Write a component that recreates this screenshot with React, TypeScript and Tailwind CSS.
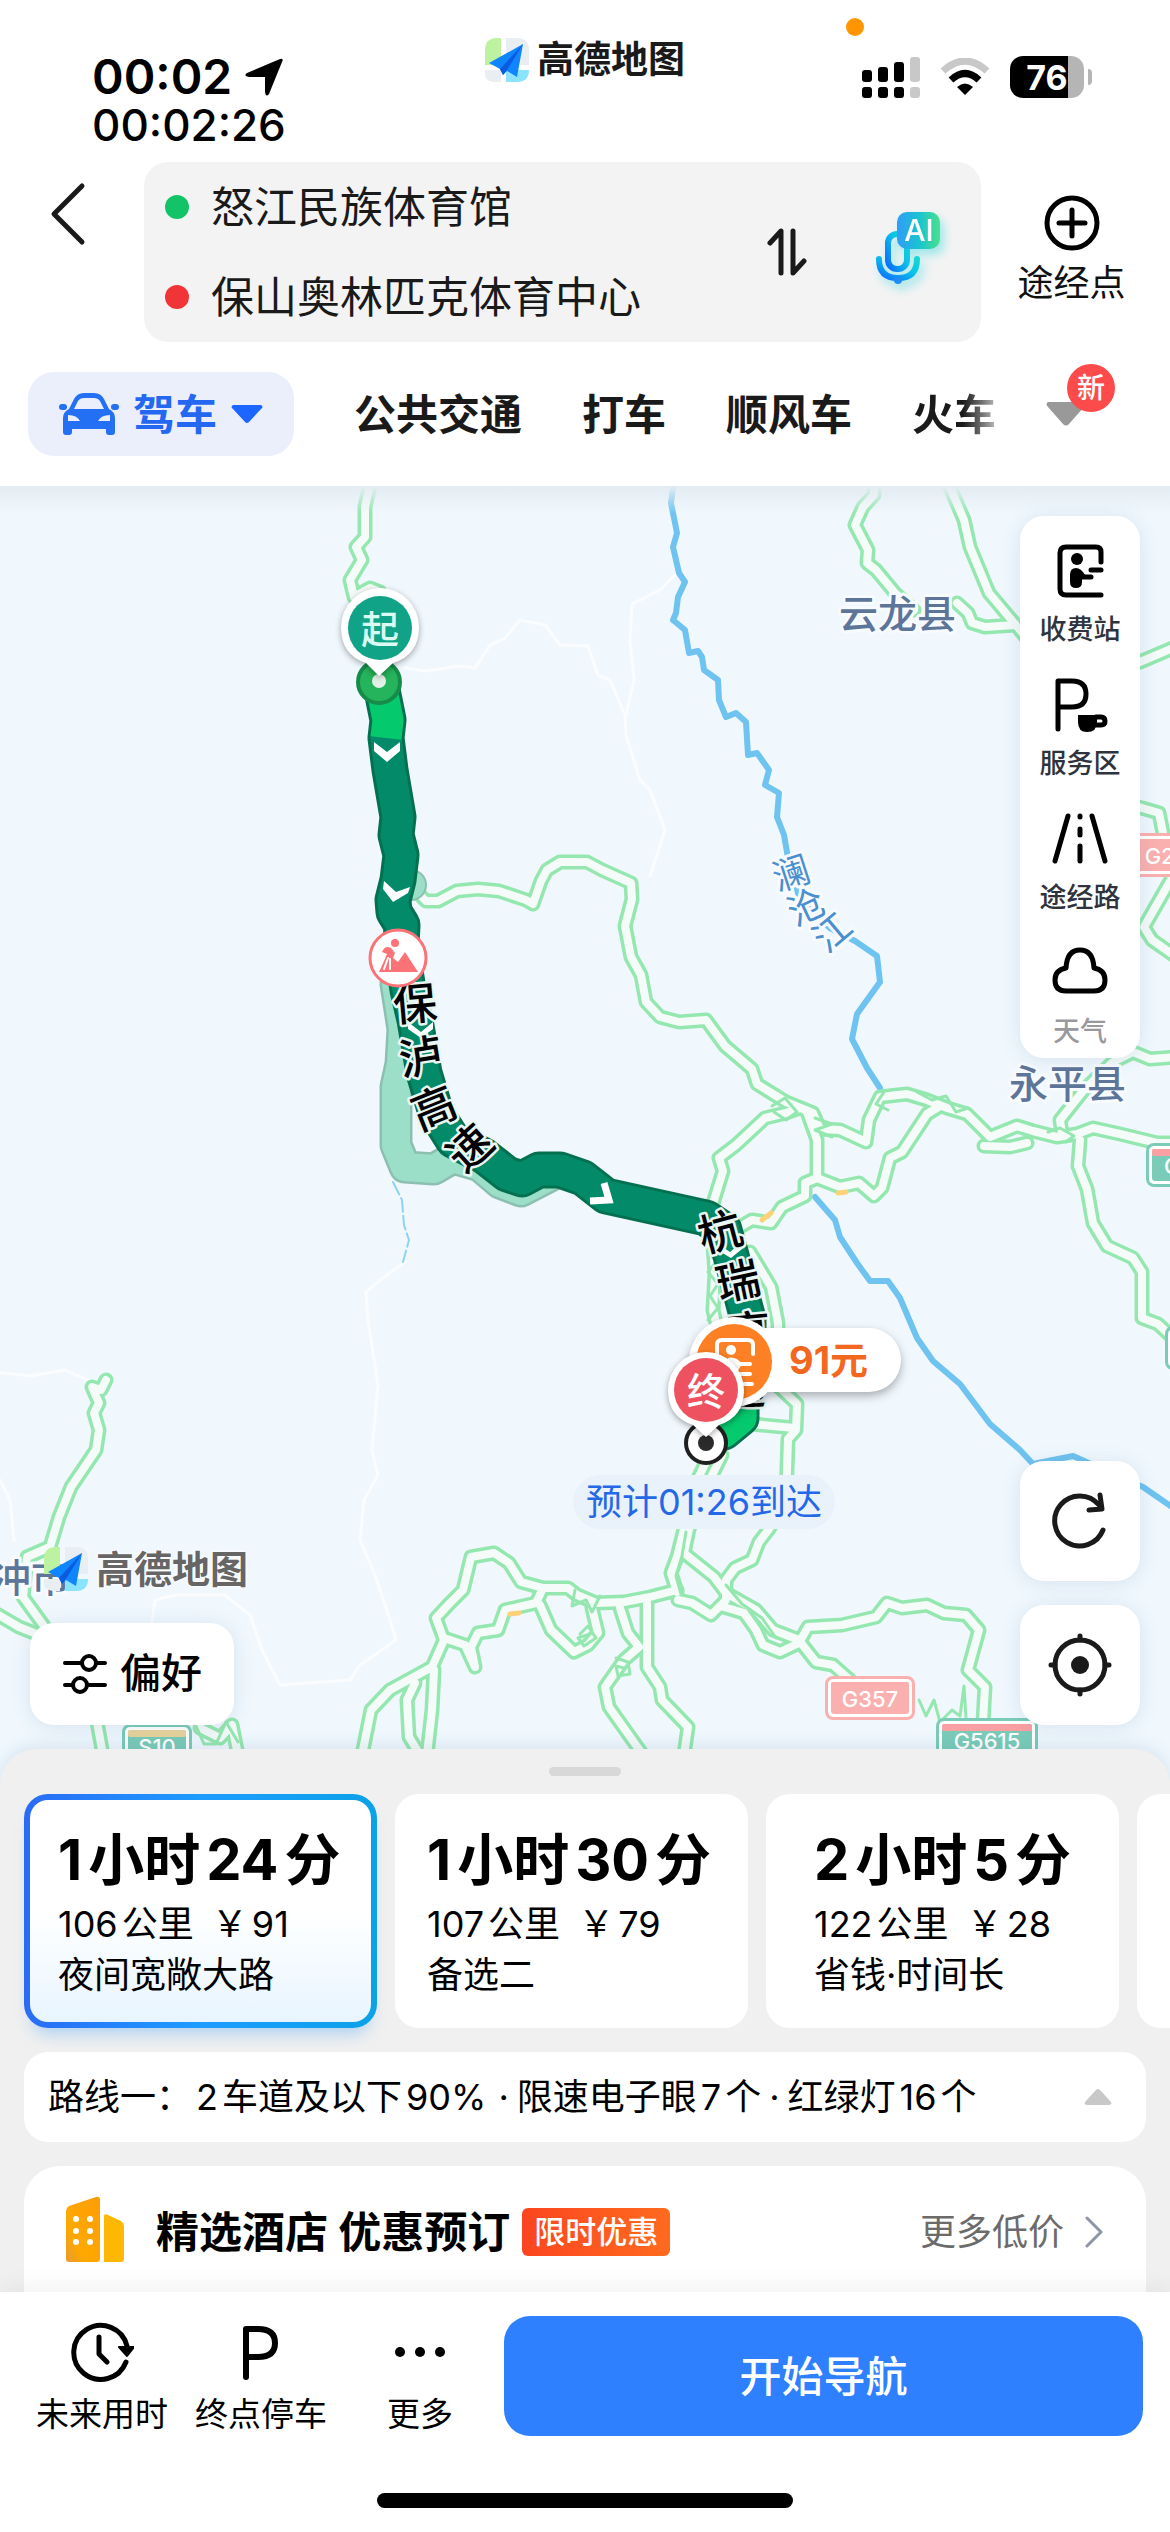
import type { ReactNode } from 'react';

const GREEN_ROADS = [
  '371,480 365,507 365,537 356,547 362,560 350,580 354,597 370,588 380,592',
  '874,480 874,495 863,507 855,525 868,550 867,563 876,570 895,593 914,610',
  '957,603 968,613 972,623 985,627 1015,625',
  '947,480 964,520 970,547 989,593 1020,630 1060,680 1140,662 1180,645',
  '1130,805 1142,808 1159,813 1163,833',
  '1172,878 1165,890 1144,927 1152,940 1175,956',
  '415,890 426,901 438,901 457,891 478,889 499,891 526,900 533,904 541,881 547,870 560,862 587,862 602,870 631,883 632,899 625,926 631,957 641,975 646,1002 660,1017 679,1022 706,1020 725,1046 752,1069 757,1084 786,1102 813,1113 820,1129 840,1130 866,1142 869,1120 880,1097 907,1094 927,1100 947,1108 967,1114 990,1137 1017,1126 1033,1131 1057,1137 1077,1134 1093,1128 1120,1134 1157,1143 1180,1143',
  '984,1146 1010,1147 1027,1143',
  '800,1108 786,1113 765,1118 736,1145 719,1158 723,1171 711,1210',
  '740,1227 752,1220 771,1223 782,1207 805,1196 805,1183 817,1178 817,1140 807,1112',
  '817,1178 840,1187 859,1183 874,1196 882,1188 890,1158 902,1152 927,1114 940,1106',
  '1080,1140 1078,1166 1087,1189 1093,1223 1107,1246 1133,1258 1142,1272 1142,1318 1158,1324 1175,1340',
  '1062,1134 1060,1120 1083,1091 1113,1062 1133,1052 1150,1059 1175,1057',
  '750,1252 771,1287 778,1323 778,1386 797,1404 796,1430 788,1439 786,1500 769,1529 759,1542 752,1560 735,1568 726,1580 726,1600 711,1615 692,1603 678,1600',
  '752,1424 794,1428',
  '713,1243 715,1274 713,1310 720,1340',
  '706,1462 690,1495 684,1529 677,1557 671,1573 677,1592',
  '722,1455 700,1500 689,1529 684,1553 714,1577 726,1593 756,1610 773,1630 799,1640',
  '724,1607 744,1613 756,1630 763,1645 780,1652 799,1643 808,1627 842,1625 876,1617 887,1603 902,1608 927,1605 944,1613 966,1615 979,1630 968,1670 985,1687 983,1722',
  '801,1643 816,1662 833,1665 850,1680',
  '677,1590 650,1597 624,1602 596,1603 577,1595 568,1588 543,1588 521,1582 509,1563 494,1553 471,1557 463,1590 450,1603 436,1618 444,1640 432,1667 390,1690 371,1710 362,1755',
  '543,1588 536,1603 505,1610 498,1630 478,1633 471,1647 475,1667 465,1645 444,1638',
  '540,1605 551,1630 574,1652 588,1645 598,1633 592,1608',
  '620,1608 628,1633 639,1647 624,1660 605,1687 609,1707 643,1755',
  '647,1603 647,1667 660,1687 662,1700 688,1727 684,1755',
  '434,1670 432,1710 427,1755',
  '415,1683 407,1700 409,1737 420,1755',
  '106,1380 101,1390 92,1387 99,1403 94,1413 99,1430 96,1450 71,1487 59,1517 50,1547 27,1557 23,1597 44,1626',
  '-5,1613 19,1627 34,1633',
  '97,1722 103,1755',
  '200,1728 220,1738 232,1725 238,1755',
];

// thin slip roads and tangled interchanges
const GREEN_LINES = [
  '772,1106 785,1098 797,1112 786,1120 774,1112',
  '815,1118 832,1124 815,1130 832,1137',
  '919,1700 926,1716 934,1700 940,1722 952,1710 960,1716 964,1686 966,1718',
  '575,1590 572,1606 586,1600 592,1612 600,1596',
  '580,1634 588,1626 596,1638 584,1646 578,1638 590,1634',
  '616,1658 628,1662 630,1674 618,1676 616,1666 624,1668',
  '708,1250 716,1262 708,1272 718,1284 710,1296 718,1308 708,1320',
  '1048,1132 1060,1128 1074,1136 1066,1142',
  '196,1726 204,1744 216,1744 226,1722 238,1742',
  '884,1092 876,1104 888,1110',
  '917,1092 932,1100 946,1096 956,1112 968,1108',
  '686,1532 682,1556 676,1576 681,1594',
  '726,1585 742,1604 762,1618 776,1638',
];

const RIVERS = [
  '674,480 671,503 677,533 673,547 679,573 685,582 678,597 676,613 673,620 685,630 689,653 698,651 702,657 704,670 718,680 719,700 726,717 736,713 746,722 748,755 757,753 769,770 765,785 779,793 777,817 784,835 788,858 800,900 830,928 855,941 877,956 880,982 857,1014 852,1039 867,1068 880,1088',
  '815,1197 835,1220 840,1237 857,1263 870,1281 888,1281 900,1298 917,1338 933,1361 960,1384 990,1424 1020,1450 1033,1464 1073,1456 1143,1487 1175,1509',
];

const FAINT_ROADS = [
  '405,668 425,671 460,666 475,668 490,645 505,638 520,620 545,625 560,645 588,646 598,675 610,680 625,715 626,735 640,780 650,790 665,830 652,870 650,876',
  '675,575 660,590 632,604 630,640 634,680 626,715',
  '405,1262 380,1280 366,1292 368,1320 378,1385 372,1450 378,1475 364,1500 360,1540 375,1575 390,1620 396,1640 360,1665 350,1680 280,1685 262,1650 250,1615 225,1595 175,1595 155,1600 152,1622',
  '-5,1372 30,1376 65,1370 92,1382',
  '0,1480 10,1500 14,1540',
];

const ROUTE =
  '382,690 388,720 386,738 390,770 398,817 396,835 401,855 398,880 393,900 394,912 402,925 401,945 408,990 415,1020 424,1073 436,1113 453,1140 484,1156 507,1174 522,1179 539,1170 560,1170 583,1178 606,1196 706,1218 724,1230 736,1274 748,1319 748,1377 741,1400 741,1418 724,1432';
const ALT_ROUTE = '400,955 396,984 403,1029 401,1064 396,1087 396,1145 405,1167 434,1169 453,1158 480,1166 500,1183 521,1191 550,1176';

const ROUTES = [
  { hours: '1', minutes: '24', distance: '106', price: '91', note: '夜间宽敞大路', pad: 'pl-7' },
  { hours: '1', minutes: '30', distance: '107', price: '79', note: '备选二', pad: 'pl-8' },
  { hours: '2', minutes: '5', distance: '122', price: '28', note: '省钱·时间长', pad: 'pl-12' },
];

const TABS = ['公共交通', '打车', '顺风车'];

function LogoMark({ className }: { className: string }) {
  return (
    <svg viewBox="0 0 44 44" className={className} aria-hidden="true">
      <path d="M12 0H16V27H0V12Q0 0 12 0Z" fill="#bdf3a0" />
      <path d="M21 0H32Q44 0 44 12V27H21Z" fill="#e8eef2" />
      <path d="M0 32H16V44H12Q0 44 0 36Z" fill="#e8eef2" />
      <path d="M21 32H44Q44 44 32 44H21Z" fill="#8be3fd" />
      <path d="M38 6L4 25L15 31L18 37L22 33L32 39Z" fill="#0f86ff" />
      <path d="M38 6L15 31L18 37L22 32Z" fill="#0a5be0" />
    </svg>
  );
}

function StatusBar() {
  return (
    <div className="relative grid h-[162px] grid-cols-3 items-start">
      <div className="flex flex-col pt-[54px] pl-[92px] font-semibold text-black">
        <div className="flex h-[46px] items-center gap-3 text-[48px] leading-none">
          <span>00:02</span>
          <svg viewBox="0 0 40 40" className="size-10" aria-hidden="true">
            <path d="M36 2Q40 1 38 5L25 37Q22 41 21 35V20H5Q-1 19 3 16Z" />
          </svg>
        </div>
        <span className="text-[44px] leading-[50px] font-medium">00:02:26</span>
      </div>
      <div className="flex items-center justify-center gap-2 pt-9 text-[37px] leading-12 font-bold text-[#1a1a1a]">
        <LogoMark className="size-11" />
        高德地图
      </div>
      <div className="flex items-center justify-end gap-5 pt-[56px] pr-[78px]">
        <svg viewBox="0 0 58 42" className="h-[42px] w-[58px]" aria-hidden="true">
          <rect x="0" y="14" width="10" height="12" rx="3" />
          <rect x="16" y="11" width="10" height="15" rx="3" />
          <rect x="32" y="6" width="10" height="20" rx="3" />
          <rect x="48" y="1" width="10" height="25" rx="3" fill="#c8c8c8" />
          <rect x="0" y="31" width="10" height="11" rx="3" />
          <rect x="16" y="31" width="10" height="11" rx="3" />
          <rect x="32" y="31" width="10" height="11" rx="3" />
          <rect x="48" y="31" width="10" height="11" rx="3" fill="#c8c8c8" />
        </svg>
        <svg viewBox="0 0 50 38" className="h-[38px] w-[50px]" fill="none" strokeWidth="7" aria-hidden="true">
          <path d="M3 13Q25 -7 47 13" stroke="#c8c8c8" />
          <path d="M11 22Q25 9 39 22" stroke="#000" />
          <path d="M17 29Q25 22 33 29L25 37Z" fill="#000" />
        </svg>
        <div className="flex items-center gap-1">
          <div className="flex h-[42px] w-[74px] items-center justify-center rounded-[13px] bg-linear-to-r from-black from-78% to-[#b5b5b5] to-78% text-[34px] font-bold text-white">
            76
          </div>
          <span className="h-4 w-1 rounded-r-full bg-[#b5b5b5]" />
        </div>
      </div>
      <span className="absolute top-[18px] right-[306px] size-[18px] rounded-full bg-[#ff9500]" />
    </div>
  );
}

function RouteSearch() {
  return (
    <div className="flex items-stretch">
      <button aria-label="返回" className="flex w-36 shrink-0 items-start pt-5 pl-[50px]">
        <svg viewBox="0 0 36 64" className="h-16 w-9" fill="none" stroke="#1a1a1a" strokeWidth="5" strokeLinecap="round" strokeLinejoin="round">
          <path d="M32 4L4 32L32 60" />
        </svg>
      </button>
      <div className="flex h-[180px] min-w-0 flex-1 items-center rounded-[24px] bg-[#f3f3f3] pr-10 pl-[21px]">
        <div className="flex min-w-0 flex-1 flex-col">
          <label className="flex h-[90px] items-center gap-[22px]">
            <span className="size-6 shrink-0 rounded-full bg-[#12c467]" />
            <input aria-label="起点" defaultValue="怒江民族体育馆" className="w-full min-w-0 bg-transparent text-[43px] text-[#1a1a1a] outline-none" />
          </label>
          <label className="flex h-[90px] items-center gap-[22px]">
            <span className="size-6 shrink-0 rounded-full bg-[#f13437]" />
            <input aria-label="终点" defaultValue="保山奥林匹克体育中心" className="w-full min-w-0 bg-transparent text-[43px] text-[#1a1a1a] outline-none" />
          </label>
        </div>
        <button aria-label="交换起终点" className="mr-17">
          <svg viewBox="0 0 40 48" className="h-12 w-10" fill="none" stroke="#1a1a1a" strokeWidth="5" strokeLinecap="round" strokeLinejoin="round">
            <path d="M14 45V3L3 15M26 3V45L37 33" />
          </svg>
        </button>
        <button aria-label="语音助手" className="-mt-2 drop-shadow-[4px_6px_5px_rgba(0,210,220,0.35)]">
          <svg viewBox="0 0 66 74" className="h-[74px] w-[66px]" fill="none">
            <defs>
              <linearGradient id="mic" x1="0" y1="1" x2="1" y2="0">
                <stop offset="0" stopColor="#0a6cff" />
                <stop offset="0.6" stopColor="#0cc4e8" />
                <stop offset="1" stopColor="#12d9d0" />
              </linearGradient>
              <linearGradient id="ai" x1="0" y1="0" x2="1" y2="0">
                <stop offset="0" stopColor="#329cf8" />
                <stop offset="0.5" stopColor="#18c3d2" />
                <stop offset="1" stopColor="#4ae08c" />
              </linearGradient>
            </defs>
            <rect x="13" y="23" width="19" height="35" rx="9" stroke="url(#mic)" strokeWidth="6" />
            <path d="M4 48Q4 67 23 67Q42 67 42 48" stroke="url(#mic)" strokeWidth="6" strokeLinecap="round" />
            <circle cx="23" cy="69" r="4" fill="#1d8cf5" />
            <rect x="22" y="1" width="43" height="37" rx="10" fill="url(#ai)" />
            <text x="44" y="30" textAnchor="middle" fontSize="30" fontWeight="500" fill="#fff">AI</text>
          </svg>
        </button>
      </div>
      <button className="flex w-[189px] shrink-0 flex-col items-center gap-[10px] pt-8 pr-2 text-[36px] leading-[42px] text-[#111]">
        <svg viewBox="0 0 58 58" className="size-[58px]" fill="none" stroke="#000" strokeWidth="5" strokeLinecap="round" aria-hidden="true">
          <circle cx="29" cy="29" r="25" />
          <path d="M29 16V42M16 29H42" />
        </svg>
        途经点
      </button>
    </div>
  );
}

function TransportTabs() {
  return (
    <nav className="relative flex items-center gap-15 pt-[30px] pb-[30px] pl-7 text-[42px] font-bold text-[#1a1a1a]">
      <button className="flex h-[84px] w-[266px] shrink-0 items-center justify-center gap-[14px] rounded-[26px] bg-[#eaeffb] text-[#2468f2]">
        <svg viewBox="0 0 60 42" className="h-[42px] w-[60px]" fill="#2470f4" aria-hidden="true">
          <path fillRule="evenodd" d="M10 16L15 6Q18 0 25 0H35Q42 0 45 6L50 16Q56 19 56 25V39Q56 42 53 42H50Q47 42 47 39V36H13V39Q13 42 10 42H7Q4 42 4 39V25Q4 19 10 16ZM15 16H45L41 8Q39 5 35 5H25Q21 5 19 8ZM9 22V28H21Q18 22 9 22ZM51 22Q42 22 39 28H51Z" />
          <rect x="0" y="11" width="8" height="6" rx="3" />
          <rect x="52" y="11" width="8" height="6" rx="3" />
        </svg>
        驾车
        <svg viewBox="0 0 32 18" className="h-[18px] w-8" aria-hidden="true">
          <path d="M2 0H30Q33 2 30 4L18 17Q16 19 14 17L2 4Q-1 2 2 0Z" fill="#1c66ff" />
        </svg>
      </button>
      {TABS.map((tab) => (
        <button key={tab} className="shrink-0 whitespace-nowrap">{tab}</button>
      ))}
      <button className="shrink-0 bg-linear-to-r from-[#1a1a1a] from-60% to-[#bbb] bg-clip-text text-transparent">火车</button>
      <button aria-label="更多出行方式" className="absolute top-[60px] right-[84px]">
        <svg viewBox="0 0 40 24" className="h-6 w-10">
          <path d="M2 0H38Q41 2 38 5L23 22Q20 25 17 22L2 5Q-1 2 2 0Z" fill="#999" />
        </svg>
      </button>
      <span className="absolute top-[22px] right-[55px] flex size-12 items-center justify-center rounded-full bg-[#fd4a4a] text-[28px] font-medium text-white">新</span>
    </nav>
  );
}

function Glyph({ x, y, turn, children }: { x: number; y: number; turn: number; children: string }) {
  return (
    <text x={x} y={y} transform={`rotate(${turn} ${x} ${y})`} textAnchor="middle" dominantBaseline="central">
      {children}
    </text>
  );
}

function Shield({ x, y, width, label, top, body }: { x: number; y: number; width: number; label: string; top: string; body: string }) {
  return (
    <g>
      <rect x={x} y={y} width={width} height="44" rx="8" fill={body} />
      <rect x={x + 3} y={y + 3} width={width - 6} height="38" rx="5" fill="#fff" />
      <rect x={x + 6} y={y + 6} width={width - 12} height="32" rx="3" fill={body} />
      <rect x={x + 6} y={y + 6} width={width - 12} height="7" rx="2" fill={top} />
      <text x={x + width / 2} y={y + 31} textAnchor="middle" fontSize="22" fontWeight="500" fill="#fff">{label}</text>
    </g>
  );
}

function RouteMap() {
  return (
    <svg viewBox="0 486 1170 1303" preserveAspectRatio="xMidYMin slice" className="absolute inset-0 h-full w-full" fill="none" strokeLinejoin="round" strokeLinecap="round">
      {FAINT_ROADS.map((points) => <polyline key={points} points={points} stroke="#fafcfe" strokeWidth="3" />)}
      <polyline points="403,1100 410,1120 404,1140" stroke="#8fd2f4" strokeWidth="3" />
      <polyline points="393,1182 402,1200 404,1225 409,1240 403,1262" stroke="#8fd2f4" strokeWidth="2" strokeDasharray="14 4" />
      {RIVERS.map((points) => <polyline key={points} points={points} stroke="#6fc3f0" strokeWidth="6" />)}
      {GREEN_ROADS.map((points) => <polyline key={points} points={points} stroke="#95e7b0" strokeWidth="15" />)}
      {GREEN_ROADS.map((points) => <polyline key={points} points={points} stroke="#f4fbf9" strokeWidth="8" />)}
      {GREEN_LINES.map((points) => <polyline key={points} points={points} stroke="#95e7b0" strokeWidth="3" />)}
      <path d="M762 1220L771 1213M838 1193L846 1192M510 1614L519 1613" stroke="#fdd278" strokeWidth="5" />

      <Shield x={825} y={1676} width={90} label="G357" top="#fbb0b0" body="#fbb0b0" />
      <Shield x={936} y={1718} width={102} label="G5615" top="#f9a0a2" body="#7accb9" />
      <Shield x={122} y={1724} width={70} label="S10" top="#ead59d" body="#7accb9" />
      <Shield x={1126} y={833} width={90} label="G215" top="#fbb0b0" body="#fbb0b0" />
      <Shield x={1146} y={1143} width={80} label="G56" top="#f9a0a2" body="#7accb9" />
      <Shield x={1165} y={1326} width={80} label="" top="#7accb9" body="#7accb9" />

      <circle cx="411" cy="885" r="15" fill="#9bdfc9" stroke="#8dbfb0" strokeWidth="2" />
      <polyline points={ALT_ROUTE} stroke="#8dbfb0" strokeWidth="33" />
      <polyline points={ALT_ROUTE} stroke="#9bdfc9" strokeWidth="28" />
      <polyline points={ROUTE} stroke="#04704f" strokeWidth="37" />
      <polyline points={ROUTE} stroke="#038b69" strokeWidth="31" />
      <path d="M382 690L388 720L386 738" stroke="#04c96d" strokeWidth="31" strokeLinecap="butt" />
      <path d="M741 1400V1418L724 1432" stroke="#04c96d" strokeWidth="31" />
      <g fill="#fff">
        <path d="M374 742L387 752L400 742V751L387 762L374 751Z" />
        <path d="M384 881L396 892L410 887L408 893L393 902L383 889Z" />
        <path d="M408 1022L421 1032L433 1022V1029L421 1038L408 1029Z" />
        <path d="M718 1244L730 1252L742 1242V1249L731 1258L719 1251Z" />
      </g>
      <path d="M604 1183L609 1200L590 1201" stroke="#fff" strokeWidth="7" strokeLinejoin="miter" strokeLinecap="butt" />

      <g className="[paint-order:stroke]" fontSize="39" fontWeight="500" fill="#5d7598" stroke="#f7fbff">
        <text x="839" y="628" strokeWidth="6">云龙县</text>
        <text x="1009" y="1098" strokeWidth="6">永平县</text>
        <text x="-8" y="1592" strokeWidth="6">冲市</text>
      </g>
      <g className="[paint-order:stroke]" fontSize="37" fill="#4b8fce" stroke="#f7fbff" strokeWidth="6">
        <Glyph x={791} y={873} turn={-18}>澜</Glyph>
        <Glyph x={806} y={907} turn={-25}>沧</Glyph>
        <Glyph x={832} y={932} turn={-40}>江</Glyph>
      </g>
      <g className="[paint-order:stroke]" fontSize="44" fontWeight="500" fill="#000" stroke="#e9f6f2" strokeWidth="5">
        <Glyph x={415} y={1004} turn={-5}>保</Glyph>
        <Glyph x={421} y={1057} turn={-9}>泸</Glyph>
        <Glyph x={434} y={1108} turn={-22}>高</Glyph>
        <Glyph x={470} y={1148} turn={-42}>速</Glyph>
        <Glyph x={720} y={1232} turn={-15}>杭</Glyph>
        <Glyph x={738} y={1281} turn={-12}>瑞</Glyph>
        <Glyph x={749} y={1332} turn={-5}>高</Glyph>
        <Glyph x={744} y={1388} turn={0}>速</Glyph>
      </g>

      {/* roadworks */}
      <circle cx="398" cy="958" r="28" fill="#fff" stroke="#fb7376" strokeWidth="3" />
      <g fill="#fb7376">
        <circle cx="395" cy="943" r="4" />
        <path d="M379 972L384 961L387 954L382 952Q385 945 391 948L395 953L393 958L398 962L405 952L418 972Z" />
      </g>
      <path d="M388 958L384 969M390 959V969" stroke="#fff" strokeWidth="2" />

      {/* start pin */}
      <circle cx="379" cy="682" r="21" fill="#25b35b" stroke="#168c4b" strokeWidth="4" />
      <circle cx="379" cy="681" r="7" fill="#e3f2e8" />
      <g className="drop-shadow-[0_2px_3px_rgba(0,0,0,0.35)]">
        <path d="M379 676L366 663Q341 655 341 627A39 39 0 0 1 419 627Q419 655 393 663Z" fill="#fff" />
      </g>
      <circle cx="380" cy="628" r="32" fill="#10a388" />
      <text x="380" y="629" textAnchor="middle" dominantBaseline="central" fontSize="38" fontWeight="500" fill="#d9fbf3">起</text>

      {/* toll price */}
      <g className="drop-shadow-[0_4px_5px_rgba(0,0,0,0.3)]">
        <rect x="734" y="1328" width="167" height="64" rx="32" fill="#fff" />
        <circle cx="734" cy="1362" r="45" fill="#fff" />
      </g>
      <circle cx="734" cy="1362" r="38" fill="#fd8025" />
      <path d="M717 1378V1345Q717 1340 722 1340H748Q753 1340 753 1345V1354M738 1364H750M738 1374H750M722 1384H752" stroke="#fff" strokeWidth="4" />
      <circle cx="731" cy="1350" r="5" fill="#fff" />
      <path d="M728 1358Q736 1356 742 1364L736 1374H728Z" fill="#fff" />
      <text x="789" y="1374" fontSize="38" fontWeight="700" fill="#f4671f">91元</text>

      {/* end pin */}
      <circle cx="706" cy="1443" r="20" fill="#fff" stroke="#1f1f1f" strokeWidth="4" />
      <circle cx="706" cy="1443" r="8" fill="#2b2b2b" />
      <g className="drop-shadow-[0_2px_3px_rgba(0,0,0,0.35)]">
        <path d="M706 1437L693 1425Q668 1417 668 1390A38 38 0 0 1 744 1390Q744 1417 719 1425Z" fill="#fff" />
      </g>
      <circle cx="706" cy="1390" r="32" fill="#ee5260" />
      <text x="706" y="1391" textAnchor="middle" dominantBaseline="central" fontSize="38" fontWeight="500" fill="#fff">终</text>

      <rect x="573" y="1475" width="262" height="54" rx="27" fill="#e9f2fb" />
      <text x="704" y="1502" textAnchor="middle" dominantBaseline="central" fontSize="36" fill="#2468e8">预计01:26到达</text>
    </svg>
  );
}

function LayerButton({ label, muted, children }: { label: string; muted?: boolean; children: ReactNode }) {
  return (
    <button className={`flex flex-col items-center gap-4 text-[27px] leading-8 font-medium ${muted ? 'text-[#99999d]' : 'text-[#2e333d]'}`}>
      <svg viewBox="0 0 56 54" className="h-[54px] w-14" fill="none" stroke="#000" strokeWidth="5" strokeLinecap="round" strokeLinejoin="round" aria-hidden="true">
        {children}
      </svg>
      {label}
    </button>
  );
}

function MapPanel() {
  return (
    <main className="relative flex min-h-[1300px] flex-1 items-stretch justify-between overflow-hidden bg-[#f0f8fe]">
      <RouteMap />
      <div className="absolute inset-x-0 top-0 h-7 bg-linear-to-b from-[#e4ecf3] to-transparent" />
      <div className="relative flex flex-col items-start justify-end gap-[30px] pb-16 pl-[30px]">
        <div className="flex items-center gap-2 pl-[14px] text-[38px] leading-12 font-bold text-[#666] [text-shadow:0_0_3px_#fff,0_0_3px_#fff]">
          <LogoMark className="size-11" />
          高德地图
        </div>
        <button className="flex h-[102px] w-[204px] items-center justify-center gap-3 rounded-[24px] bg-white text-[41px] font-medium text-black shadow-[0_2px_20px_rgba(60,90,130,0.14)]">
          <svg viewBox="0 0 46 40" className="h-10 w-[46px]" fill="none" stroke="#000" strokeWidth="4" strokeLinecap="round" aria-hidden="true">
            <path d="M3 9H18M35 9H43M3 31H10M27 31H43" />
            <circle cx="27" cy="9" r="7" />
            <circle cx="18" cy="31" r="7" />
          </svg>
          偏好
        </button>
      </div>
      <div className="relative flex w-[150px] flex-col justify-between pt-[30px] pr-[30px] pb-16">
        <div className="flex flex-col gap-8 rounded-[24px] bg-white pt-7 pb-[10px] shadow-[0_2px_20px_rgba(60,90,130,0.14)]">
          <LayerButton label="收费站">
            <path d="M49 18V8Q49 3 44 3H14Q8 3 8 9V45Q8 51 14 51H49M39 26H49M31 33H39" />
            <circle cx="25" cy="15" r="6" fill="#000" stroke="none" />
            <path d="M18 31Q18 24 24 24Q29 24 33 31L30 36V38Q30 44 24 44Q18 44 18 38Z" fill="#000" stroke="none" />
          </LayerButton>
          <LayerButton label="服务区">
            <path d="M6 51V3H20Q34 3 34 16Q34 29 20 29H6M44 39H49Q53 39 53 43Q53 47 49 47H44" />
            <path d="M26 37H45V44Q45 54 35 54Q26 54 26 44Z" fill="#000" stroke="none" />
          </LayerButton>
          <LayerButton label="途经路">
            <path d="M16 4L3 49M40 4L53 49M28 4V5M28 17V23M28 34V49" />
          </LayerButton>
          <LayerButton label="天气" muted>
            <path d="M14 45Q3 45 3 34Q3 24 14 22Q15 4 28 4Q41 4 42 22Q53 24 53 34Q53 45 42 45Z" />
          </LayerButton>
        </div>
        <div className="flex flex-col gap-6">
          <button aria-label="刷新" className="flex size-30 items-center justify-center rounded-[24px] bg-white shadow-[0_2px_20px_rgba(60,90,130,0.14)]">
            <svg viewBox="0 0 56 58" className="h-[58px] w-14" fill="none" stroke="#1a1a1a" strokeWidth="5" strokeLinecap="round" strokeLinejoin="round">
              <path d="M51 38A25 25 0 1 1 47 13M48 3L50 17L37 18" />
            </svg>
          </button>
          <button aria-label="定位" className="flex size-30 items-center justify-center rounded-[24px] bg-white shadow-[0_2px_20px_rgba(60,90,130,0.14)]">
            <svg viewBox="0 0 66 66" className="size-[66px]" fill="none" stroke="#1a1a1a" strokeWidth="5" strokeLinecap="round">
              <circle cx="33" cy="33" r="25" />
              <path d="M33 4V8M33 58V62M4 33H8M58 33H62" />
              <circle cx="33" cy="33" r="9" fill="#1a1a1a" stroke="none" />
            </svg>
          </button>
        </div>
      </div>
    </main>
  );
}

function RouteCards() {
  return (
    <div className="flex gap-[18px] overflow-hidden pb-6 pl-6">
      {ROUTES.map((route, index) => (
        <div key={route.note} className={`w-[353px] shrink-0 rounded-[24px] ${index === 0 ? 'bg-linear-to-r from-[#2a6bf5] via-[#1d9cff] to-[#0aa2e8] p-[6px] shadow-[0_14px_16px_-8px_rgba(110,180,245,0.5)]' : 'bg-white p-0'}`}>
          <button className={`flex w-full flex-col items-start text-left text-black ${route.pad} ${index === 0 ? 'h-[222px] rounded-[18px] bg-linear-to-b from-white from-50% to-[#e8f5ff] pt-6' : 'h-[234px] pt-[30px]'}`}>
            <span className="flex items-baseline text-[56px] leading-[72px] font-bold whitespace-nowrap">
              {route.hours}<span className="mx-1.5">小时</span>{route.minutes}<span className="ml-1.5">分</span>
            </span>
            <span className="text-[36px] leading-[56px] whitespace-nowrap">
              {route.distance}<span className="ml-1 mr-2">公里</span> ￥<span className="ml-1">{route.price}</span>
            </span>
            <span className="text-[36px] leading-[46px] whitespace-nowrap">{route.note}</span>
          </button>
        </div>
      ))}
      <div className="w-[353px] shrink-0 rounded-[24px] bg-white" />
    </div>
  );
}

function RouteSheet() {
  return (
    <section className="relative -mt-10 rounded-t-[36px] bg-[#f0f0f0] pt-[18px] shadow-[0_-4px_16px_rgba(60,90,130,0.12)]">
      <div className="mx-auto mb-[18px] h-[9px] w-[72px] rounded-full bg-[#d8d8d8]" />
      <RouteCards />
      <button className="mx-6 flex h-[90px] w-[calc(100%-48px)] items-center justify-between rounded-[24px] bg-white pr-[34px] pl-6 text-[36px] text-black">
        <span className="whitespace-nowrap">
          路线一：<span className="mx-1">2</span>车道及以下<span className="mx-1">90%</span>
          <span className="mx-2">·</span>限速电子眼<span className="mx-1">7</span>个
          <span className="mx-2">·</span>红绿灯<span className="mx-1">16</span>个
        </span>
        <svg viewBox="0 0 28 16" className="h-4 w-7" aria-hidden="true">
          <path d="M12 1Q14 -1 16 1L27 13Q28 16 25 16H3Q0 16 1 13Z" fill="#c8c8c8" />
        </svg>
      </button>
      <div className="mx-6 mt-6 flex h-[126px] items-start rounded-t-[36px] bg-white pt-[30px] pr-[42px] pl-[42px]">
        <svg viewBox="0 0 58 66" className="h-[66px] w-[58px] shrink-0" aria-hidden="true">
          <defs>
            <linearGradient id="tower" x1="1" y1="0" x2="0" y2="1">
              <stop offset="0" stopColor="#fb9d05" />
              <stop offset="0.7" stopColor="#ffa800" />
              <stop offset="1" stopColor="#e89a30" />
            </linearGradient>
          </defs>
          <path d="M0 15Q0 12 3 10L30 1Q34 0 34 4V63Q34 66 31 66H3Q0 66 0 63Z" fill="url(#tower)" />
          <path d="M38 20Q38 17 42 19L55 25Q58 27 58 30V63Q58 66 55 66H38Z" fill="#fdb805" />
          <g fill="#fff">
            <circle cx="10" cy="23" r="3" /><circle cx="24" cy="23" r="3" />
            <circle cx="10" cy="35" r="3" /><circle cx="24" cy="35" r="3" />
            <circle cx="10" cy="46" r="3" /><circle cx="24" cy="46" r="3" />
          </g>
        </svg>
        <h2 className="ml-8 text-[43px] leading-[72px] font-bold whitespace-nowrap text-black">精选酒店 优惠预订</h2>
        <span className="mt-3 ml-3 flex h-12 items-center rounded-[6px] bg-linear-to-r from-[#fb4420] to-[#ff6a1e] px-3 text-[31px] font-medium whitespace-nowrap text-white">限时优惠</span>
        <a href="#hotels" className="ml-auto flex items-center gap-5 text-[36px] leading-[72px] whitespace-nowrap text-[#6b6b6b]">
          更多低价
          <svg viewBox="0 0 20 32" className="h-8 w-5" fill="none" stroke="#8d96a8" strokeWidth="3" strokeLinecap="round" strokeLinejoin="round" aria-hidden="true">
            <path d="M3 2L17 16L3 30" />
          </svg>
        </a>
      </div>
    </section>
  );
}

function ActionButton({ label, children }: { label: string; children: ReactNode }) {
  return (
    <button className="flex w-[132px] flex-col items-center gap-3 pt-[6px] text-[33px] leading-10 whitespace-nowrap text-black">
      <svg viewBox="0 0 64 60" className="h-15 w-16" fill="none" stroke="#000" strokeWidth="6" strokeLinecap="round" strokeLinejoin="round" aria-hidden="true">
        {children}
      </svg>
      {label}
    </button>
  );
}

function BottomBar() {
  return (
    <footer className="relative flex h-[240px] flex-col justify-between bg-white pt-6 pb-6 shadow-[0_-4px_24px_rgba(0,0,0,0.06)]">
      <div className="flex items-start pr-[27px] pl-9">
        <div className="flex gap-[27px]">
          <ActionButton label="未来用时">
            <path d="M56 40A27 27 0 1 1 57 24M29 15V32L37 40" strokeWidth="5" />
            <path d="M49 25H64L57 34Z" fill="#000" strokeWidth="2" />
          </ActionButton>
          <ActionButton label="终点停车">
            <path d="M17 55V7H29Q46 7 46 21Q46 35 29 35H17" />
          </ActionButton>
          <ActionButton label="更多">
            <g fill="#000" stroke="none">
              <circle cx="12" cy="30" r="5" />
              <circle cx="32" cy="30" r="5" />
              <circle cx="52" cy="30" r="5" />
            </g>
          </ActionButton>
        </div>
        <button className="ml-[18px] h-30 flex-1 rounded-[26px] bg-[#2e80ff] text-[42px] font-medium text-white">开始导航</button>
      </div>
      <div className="mx-auto h-[15px] w-[416px] rounded-full bg-black" />
    </footer>
  );
}

export default function App() {
  return (
    <div className="flex min-h-screen flex-col overflow-hidden bg-white font-['Inter','Noto_Sans_CJK_SC',sans-serif]">
      <header>
        <StatusBar />
        <RouteSearch />
        <TransportTabs />
      </header>
      <MapPanel />
      <RouteSheet />
      <BottomBar />
    </div>
  );
}
